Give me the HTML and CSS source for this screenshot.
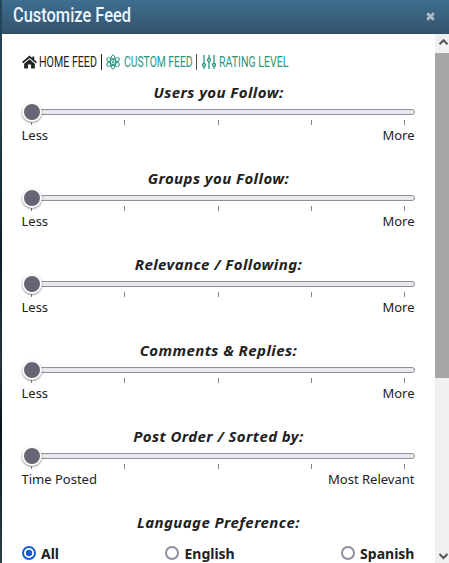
FILE: index.html
```
<!DOCTYPE html>
<html lang="en">
<head>
    <meta charset="utf-8">
    <title>Customize Feed</title>
    <link rel="stylesheet" href="styles.css">
</head>
<body>
    <div class="modal">
        <div class="modal-header">
            <h1><span class="condensed">Customize Feed</span></h1>
            <svg class="close" viewBox="0 0 10 10"><path d="M2 2l6 6M8 2l-6 6"/></svg>
        </div>
        <div class="modal-body">
            <div class="content">
                <div class="tabs">
                    <svg class="icon home" viewBox="0 0 16 14"><path d="M8 0L0 7l1.2 1.4L8 2.6l6.8 5.8L16 7l-3-2.6V1h-2v1.7z"/><path d="M8 4L2.3 8.8V14h4V9.7h3.4V14h4V8.8z"/></svg>
                    <a class="tab tab-home"><span class="condensed">HOME FEED</span></a>
                    <span class="divider"></span>
                    <svg class="icon atom" viewBox="0 0 14 16"><ellipse cx="7" cy="8" rx="2.6" ry="7"/><ellipse cx="7" cy="8" rx="2.6" ry="7" transform="rotate(60 7 8)"/><ellipse cx="7" cy="8" rx="2.6" ry="7" transform="rotate(120 7 8)"/><circle cx="7" cy="8" r="1"/></svg>
                    <a class="tab tab-custom"><span class="condensed">CUSTOM FEED</span></a>
                    <span class="divider brown"></span>
                    <svg class="icon levels" viewBox="0 0 14 16"><path d="M2 1v8M2 13v2M7 1v3M7 8v7M12 1v8M12 13v2"/><circle cx="2" cy="11" r="1.5"/><circle cx="7" cy="6" r="1.5"/><circle cx="12" cy="11" r="1.5"/></svg>
                    <a class="tab tab-rating"><span class="condensed">RATING LEVEL</span></a>
                </div>

                <div class="setting">
                    <h2>Users you Follow:</h2>
                    <div class="slider"><div class="track"></div><div class="thumb"></div></div>
                    <div class="ticks"><i></i><i></i><i></i><i></i><i></i></div>
                    <div class="labels"><span>Less</span><span>More</span></div>
                </div>
                <div class="setting">
                    <h2>Groups you Follow:</h2>
                    <div class="slider"><div class="track"></div><div class="thumb"></div></div>
                    <div class="ticks"><i></i><i></i><i></i><i></i><i></i></div>
                    <div class="labels"><span>Less</span><span>More</span></div>
                </div>
                <div class="setting">
                    <h2>Relevance / Following:</h2>
                    <div class="slider"><div class="track"></div><div class="thumb"></div></div>
                    <div class="ticks"><i></i><i></i><i></i><i></i><i></i></div>
                    <div class="labels"><span>Less</span><span>More</span></div>
                </div>
                <div class="setting">
                    <h2>Comments &amp; Replies:</h2>
                    <div class="slider"><div class="track"></div><div class="thumb"></div></div>
                    <div class="ticks"><i></i><i></i><i></i><i></i><i></i></div>
                    <div class="labels"><span>Less</span><span>More</span></div>
                </div>
                <div class="setting">
                    <h2>Post Order / Sorted by:</h2>
                    <div class="slider"><div class="track"></div><div class="thumb"></div></div>
                    <div class="ticks"><i></i><i></i><i></i><i></i><i></i></div>
                    <div class="labels"><span>Time Posted</span><span>Most Relevant</span></div>
                </div>

                <h2>Language Preference:</h2>
                <div class="languages">
                    <label><span class="radio checked"></span>All</label>
                    <label><span class="radio"></span>English</label>
                    <label><span class="radio"></span>Spanish</label>
                </div>
            </div>
            <div class="scrollbar">
                <svg class="arrow" viewBox="0 0 14 19"><path d="M4.5 10.2L8.5 6.2l4 4"/></svg>
                <div class="scroll-thumb"></div>
                <svg class="arrow" viewBox="0 0 14 19"><path d="M4.5 10l4 4 4-4"/></svg>
            </div>
        </div>
    </div>
</body>
</html>
```

FILE: styles.css
```
* {
    box-sizing: border-box;
}
body {
    margin: 0;
    height: 563px;
    overflow: hidden;
    padding-left: 2px;
    background: linear-gradient(#24465c, #253e4b 20%, #0c1e2b 45%, #28343c 65%, #08131c 75%, #2c3e46);
    font-family: "Noto Sans", "Open Sans", sans-serif;
    color: #222;
}
.modal {
    height: 563px;
    background: #fff;
}
.modal-header {
    display: flex;
    justify-content: space-between;
    height: 34px;
    padding: 0 13px 0 11px;
    background: linear-gradient(#3f6e90, #34536c);
    border-bottom: 1px solid #2f4d63;
}
.modal-header h1 {
    margin: 0;
    width: 118px;
    font: 500 20px/31px Roboto, sans-serif;
    color: #eaf6ff;
    white-space: nowrap;
}
/* narrow headline lettering */
.condensed {
    display: inline-block;
    transform-origin: 0 50%;
}
h1 .condensed {
    transform: scaleX(.82);
}
.close {
    width: 11px;
    height: 11px;
    margin-top: 11px;
    fill: none;
    stroke: #adbdca;
    stroke-width: 2.5;
}
.modal-body {
    display: flex;
    height: 529px;
}
.content {
    width: 433px;
    padding: 17px 20px 0;
    overflow: hidden;
}
.tabs {
    display: flex;
    align-items: center;
    height: 22px;
    margin-bottom: 9px;
}
.icon {
    flex: none;
    fill: none;
    stroke: #279680;
}
.home {
    width: 15px;
    height: 14px;
    fill: #222;
    stroke: none;
}
.atom {
    width: 14px;
    height: 16px;
}
.levels {
    width: 14px;
    height: 16px;
    stroke-width: 1.3;
}
.tab {
    flex: none;
    font: 400 15px/22px Roboto, sans-serif;
    color: #279680;
    white-space: nowrap;
    margin-left: 2px;
}
.tab-home {
    width: 60px;
    color: #222;
}
.tab-home .condensed {
    transform: scaleX(.71);
}
.tab-custom {
    width: 70px;
    margin-left: 4px;
}
.tab-custom .condensed {
    transform: scaleX(.69);
}
.tab-rating {
    width: 70px;
    margin-left: 3px;
}
.tab-rating .condensed {
    transform: scaleX(.705);
}
.divider {
    flex: none;
    width: 1px;
    height: 16px;
    margin: 0 4px 1px 2px;
    background: #222;
}
.brown {
    margin-right: 5px;
    background: #60484b;
}
h2 {
    margin: 0;
    font-size: 15px;
    letter-spacing: .42px;
    line-height: 20px;
    font-weight: 700;
    font-style: italic;
    text-align: center;
}
.setting {
    height: 86px;
}
.slider {
    display: grid;
    align-items: center;
    height: 20px;
}
.track,
.thumb {
    grid-area: 1 / 1;
}
.track {
    height: 6px;
    background: #e9e9ed;
    border: 1px solid #8f8f9d;
    border-radius: 3px;
}
.thumb {
    width: 20px;
    height: 20px;
    background: #676474;
    border: 2px solid #fff;
    border-radius: 50%;
    box-shadow: 0 1px 2px rgba(0, 0, 0, .45);
    z-index: 1;
}
.ticks {
    display: flex;
    justify-content: space-between;
    height: 5px;
    margin-top: -2px;
    padding: 0 10px 0 9px;
}
.ticks i {
    width: 1px;
    background: #858585;
}
.labels {
    display: flex;
    justify-content: space-between;
    margin: 1px .5px 0 -.5px;
    font-size: 13px;
    line-height: 18px;
}
.languages {
    display: flex;
    justify-content: space-between;
    margin: 12px .5px 0 0;
    font-size: 14px;
    line-height: 20px;
    font-weight: 700;
}
.languages label {
    display: flex;
}
.radio {
    width: 14px;
    height: 14px;
    margin: 2px 5px 0 0;
    border: 2px solid #8f8f9d;
    border-radius: 50%;
}
.checked {
    border-color: #1460d2;
    background: radial-gradient(circle, #1460d2 3px, #fff 3.6px);
}
.scrollbar {
    display: flex;
    flex-direction: column;
    width: 14px;
    background: #f0f0f0;
}
.arrow {
    width: 14px;
    height: 19px;
    fill: none;
    stroke: #555;
    stroke-width: 2;
}
.scroll-thumb {
    height: 325px;
    margin-bottom: auto;
    background: #a6a6a6;
}
```
